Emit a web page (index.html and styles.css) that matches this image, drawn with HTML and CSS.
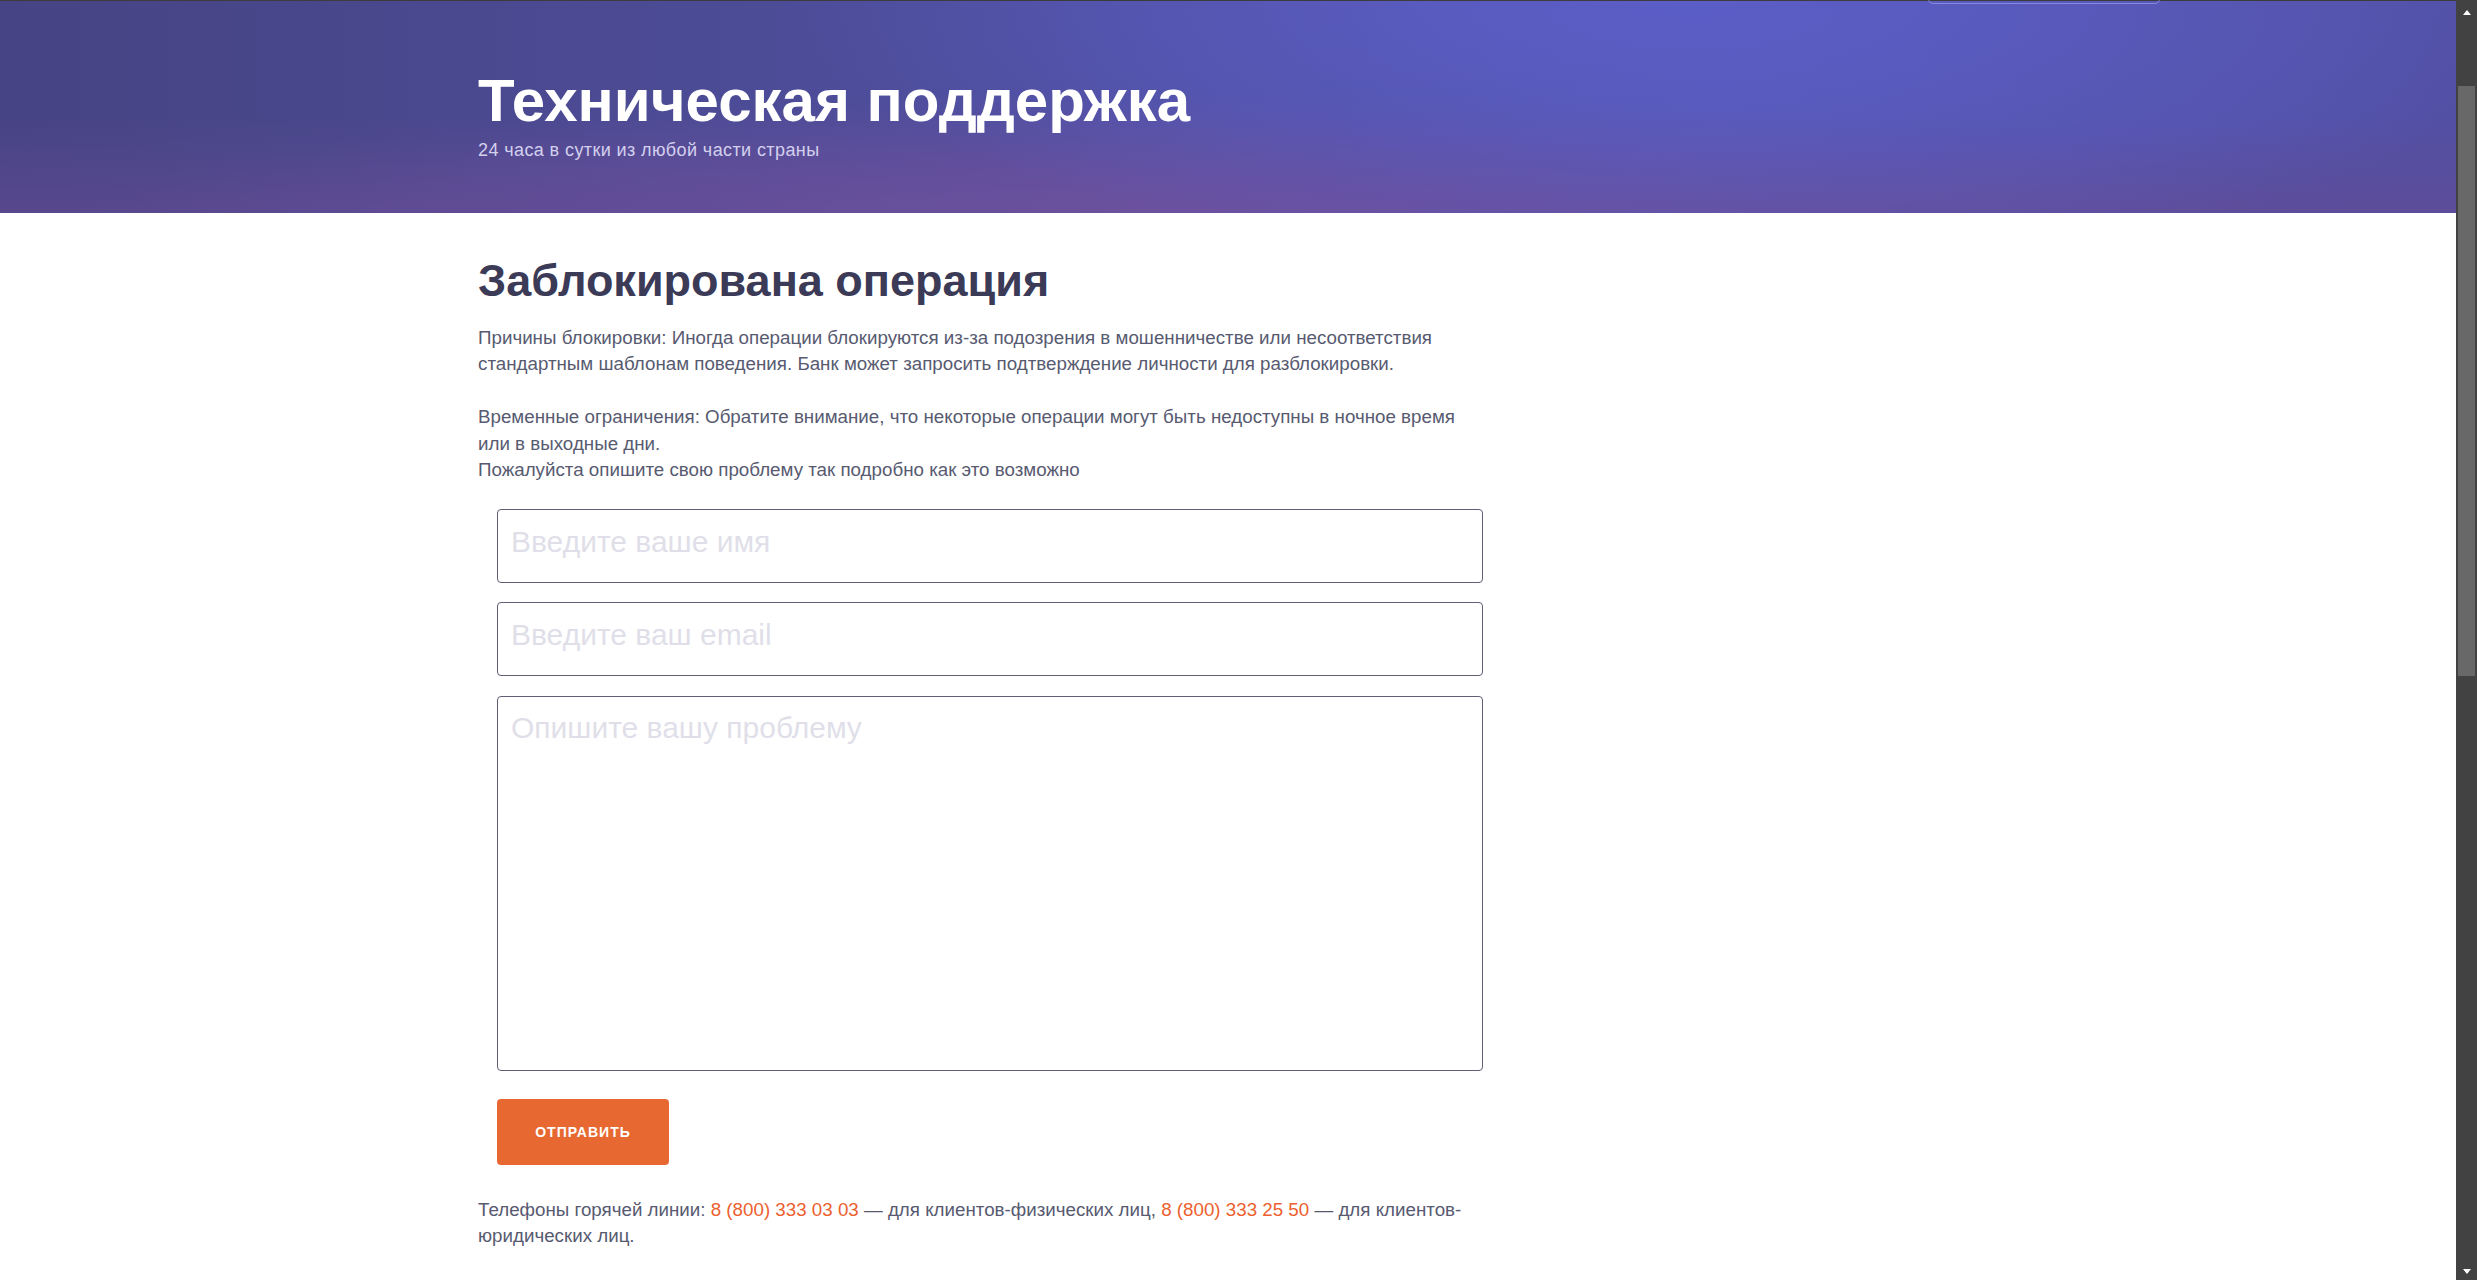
FILE: index.html
```html
<!DOCTYPE html>
<html lang="ru">
<head>
<meta charset="utf-8">
<title>Техническая поддержка</title>
<link rel="stylesheet" href="styles.css">
</head>
<body>
<div class="screen">
  <div class="page">
    <div class="topline"></div>
    <header class="hero">
      <div class="hero-tab"></div>
      <div class="container">
        <h1 class="hero-title">Техническая поддержка</h1>
        <p class="hero-sub">24 часа в сутки из любой части страны</p>
      </div>
    </header>
    <main class="container">
      <div class="content">
        <h2 class="section-title">Заблокирована операция</h2>
        <p class="text">Причины блокировки: Иногда операции блокируются из-за подозрения в мошенничестве или несоответствия стандартным шаблонам поведения. Банк может запросить подтверждение личности для разблокировки.<br><br>Временные ограничения: Обратите внимание, что некоторые операции могут быть недоступны в ночное время или в выходные дни.<br>Пожалуйста опишите свою проблему так подробно как это возможно</p>
        <form class="form">
          <input class="field" type="text" placeholder="Введите ваше имя">
          <input class="field" type="email" placeholder="Введите ваш email">
          <textarea class="field area" placeholder="Опишите вашу проблему"></textarea>
          <div class="actions"><button class="submit" type="button">Отправить</button></div>
        </form>
        <p class="text footer-text">Телефоны горячей линии: <a class="phone" href="#">8 (800) 333 03 03</a> — для клиентов-физических лиц, <a class="phone" href="#">8 (800) 333 25 50</a> — для клиентов-юридических лиц.</p>
      </div>
    </main>
  </div>
  <div class="scrollbar">
    <div class="sb-btn"><span class="tri-up"></span></div>
    <div class="sb-track"><div class="sb-thumb"></div></div>
    <div class="sb-btn sb-btn-down"><span class="tri-down"></span></div>
  </div>
</div>
</body>
</html>
```

FILE: styles.css
```css
* { box-sizing: border-box; }
html, body { margin: 0; padding: 0; height: 100%; overflow: hidden; }
body { font-family: "Liberation Sans", Arial, sans-serif; background: #ffffff; }

.screen { display: flex; height: 1280px; width: 100%; }
.page { flex: 1; display: flex; flex-direction: column; overflow: hidden; background: #fff; }

.topline { height: 1px; background: #3c3c3c; flex: none; }

.hero {
  position: relative;
  height: 212px;
  flex: none;
  padding-top: 65px;
  background:
    radial-gradient(ellipse 900px 260px at 1680px 0px, rgba(92, 94, 200, 0.95) 0%, rgba(92, 94, 200, 0) 100%),
    radial-gradient(ellipse 1100px 120px at 1200px 212px, rgba(112, 82, 160, 0.8) 0%, rgba(112, 82, 160, 0) 100%),
    linear-gradient(to bottom, rgba(95, 75, 145, 0) 55%, rgba(100, 74, 146, 0.6) 100%),
    linear-gradient(to right, #464484 0%, #4f4f9f 45%, #5556b0 70%, #5250a4 100%);
}
.hero-tab {
  position: absolute;
  left: 1928px;
  top: -40px;
  width: 232px;
  height: 43px;
  border: 1px solid rgba(150, 155, 235, 0.75);
  border-radius: 5px;
}
.container { width: 1500px; margin: 0 auto; }
.hero-title {
  margin: 0;
  font-size: 60px;
  line-height: 1.15;
  font-weight: 700;
  color: #ffffff;
}
.hero-sub {
  margin: 5px 0 0;
  font-size: 18px;
  letter-spacing: 0.4px;
  line-height: 1.15;
  color: #d3d0ee;
}

.content { width: 1000px; padding-top: 42px; }
.section-title {
  margin: 0;
  font-size: 45px;
  line-height: 1.15;
  font-weight: 700;
  color: #3b3a57;
}
.text {
  margin: 18px 0 0;
  font-size: 18.75px;
  line-height: 26.5px;
  color: #575a70;
}
.form {
  margin: 25px 0 0 19px;
  width: 986px;
  display: flex;
  flex-direction: column;
  gap: 19px;
}
.field {
  display: block;
  width: 100%;
  height: 74px;
  border: 1px solid #5f5f75;
  border-radius: 4px;
  padding: 14px 13px 22px;
  font-family: "Liberation Sans", Arial, sans-serif;
  font-size: 30px;
  color: #333;
  background: #fff;
  outline: none;
}
.field::placeholder { color: #e0dfe9; }
.area { height: 375px; padding: 14px 13px 8px; resize: none; margin-top: 1px; }
.actions { padding-top: 9px; }
.submit {
  display: block;
  width: 172px;
  height: 66px;
  border: none;
  border-radius: 4px;
  background: #e86831;
  color: #ffffff;
  font-family: "Liberation Sans", Arial, sans-serif;
  font-weight: 700;
  font-size: 14px;
  letter-spacing: 1px;
  text-transform: uppercase;
}
.footer-text { margin-top: 32px; }
.phone { color: #ec5f2e; text-decoration: none; }

.scrollbar {
  width: 21px;
  flex: none;
  background: #424242;
  display: flex;
  flex-direction: column;
}
.sb-btn { height: 20px; flex: none; display: flex; justify-content: center; padding-top: 10px; }
.sb-btn-down { padding-top: 9px; height: 20px; }
.tri-up { width: 0; height: 0; border-left: 4.5px solid transparent; border-right: 4.5px solid transparent; border-bottom: 5px solid #ffffff; }
.tri-down { width: 0; height: 0; border-left: 4.5px solid transparent; border-right: 4.5px solid transparent; border-top: 5px solid #ffffff; }
.sb-track { flex: 1; padding: 66px 2px 0 2px; }
.sb-thumb { height: 590px; background: #686868; }
```
